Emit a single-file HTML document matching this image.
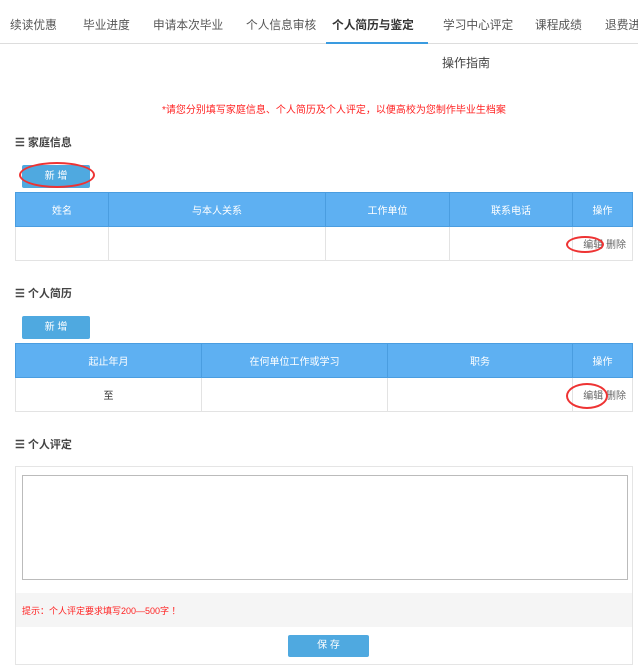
<!DOCTYPE html>
<html><head><meta charset="utf-8"><style>
*{margin:0;padding:0;box-sizing:border-box}
body{width:638px;height:668px;overflow:hidden;background:#fff;font-family:"Liberation Sans","Noto Sans CJK SC",sans-serif;color:#333;position:relative}
.a{position:absolute;white-space:nowrap}
.tab{position:absolute;top:16px;font-size:11.7px;color:#555;white-space:nowrap}
.btn{position:absolute;background:#4fa9e0;color:#fff;font-size:10px;text-align:center;border-radius:2px}
table{position:absolute;border-collapse:collapse;font-size:10px}
th{background:#5eb0f2;color:#fff;font-weight:normal;border:1px solid #4a9de0;height:34px}
td{border:1px solid #e3e3e3;height:34px;text-align:center;color:#333}
.h{position:absolute;left:15px;font-size:11px;font-weight:bold;color:#444;white-space:nowrap}
.ell{position:absolute;border:2px solid #e33;border-radius:50%}
.op{font-size:10px;color:#666;text-align:right;padding-right:6px}
</style></head><body>
<span class="tab" style="left:10px">续读优惠</span>
<span class="tab" style="left:83px">毕业进度</span>
<span class="tab" style="left:153px">申请本次毕业</span>
<span class="tab" style="left:246px">个人信息审核</span>
<span class="tab" style="left:332px;font-weight:bold;color:#333">个人简历与鉴定</span>
<span class="tab" style="left:443px">学习中心评定</span>
<span class="tab" style="left:535px">课程成绩</span>
<span class="tab" style="left:605px">退费进度</span>
<div class="a" style="left:0;top:43px;width:638px;height:1px;background:#ddd"></div>
<div class="a" style="left:326px;top:42px;width:102px;height:2px;background:#3a9be0"></div>
<span class="a" style="left:442px;top:54px;font-size:12px;color:#444">操作指南</span>
<span class="a" style="left:162px;top:101px;font-size:10px;color:#f22">*请您分别填写家庭信息、个人简历及个人评定，以便高校为您制作毕业生档案</span>

<span class="h" style="top:134px">☰ 家庭信息</span>
<div class="btn" style="left:22px;top:165px;width:68px;height:23px;line-height:23px">新 增</div>
<div class="ell" style="left:19px;top:162px;width:76px;height:26px"></div>
<table style="left:15px;top:192px;width:618px">
<tr><th style="width:93px">姓名</th><th style="width:217px">与本人关系</th><th style="width:124px">工作单位</th><th style="width:123px">联系电话</th><th>操作</th></tr>
<tr><td></td><td></td><td></td><td></td><td class="op" style="padding-top:0">编辑 删除</td></tr>
</table>
<div class="ell" style="left:566px;top:236px;width:38px;height:17px"></div>

<span class="h" style="top:285px">☰ 个人简历</span>
<div class="btn" style="left:22px;top:316px;width:68px;height:23px;line-height:23px">新 增</div>
<table style="left:15px;top:343px;width:618px">
<tr><th style="width:186px">起止年月</th><th style="width:186px">在何单位工作或学习</th><th style="width:185px">职务</th><th>操作</th></tr>
<tr><td>至</td><td></td><td></td><td class="op">编辑 删除</td></tr>
</table>
<div class="ell" style="left:566px;top:383px;width:42px;height:26px"></div>

<span class="h" style="top:436px">☰ 个人评定</span>
<div class="a" style="left:15px;top:466px;width:618px;height:199px;border:1px solid #e5e5e5"></div>
<div class="a" style="left:22px;top:475px;width:606px;height:105px;border:1px solid #bbb"></div>
<div class="a" style="left:16px;top:593px;width:616px;height:34px;background:#f5f5f5"></div>
<span class="a" style="left:22px;top:604px;font-size:9px;color:#f22">提示：个人评定要求填写200—500字 ！</span>
<div class="btn" style="left:288px;top:635px;width:81px;height:22px;line-height:22px">保 存</div>
</body></html>
